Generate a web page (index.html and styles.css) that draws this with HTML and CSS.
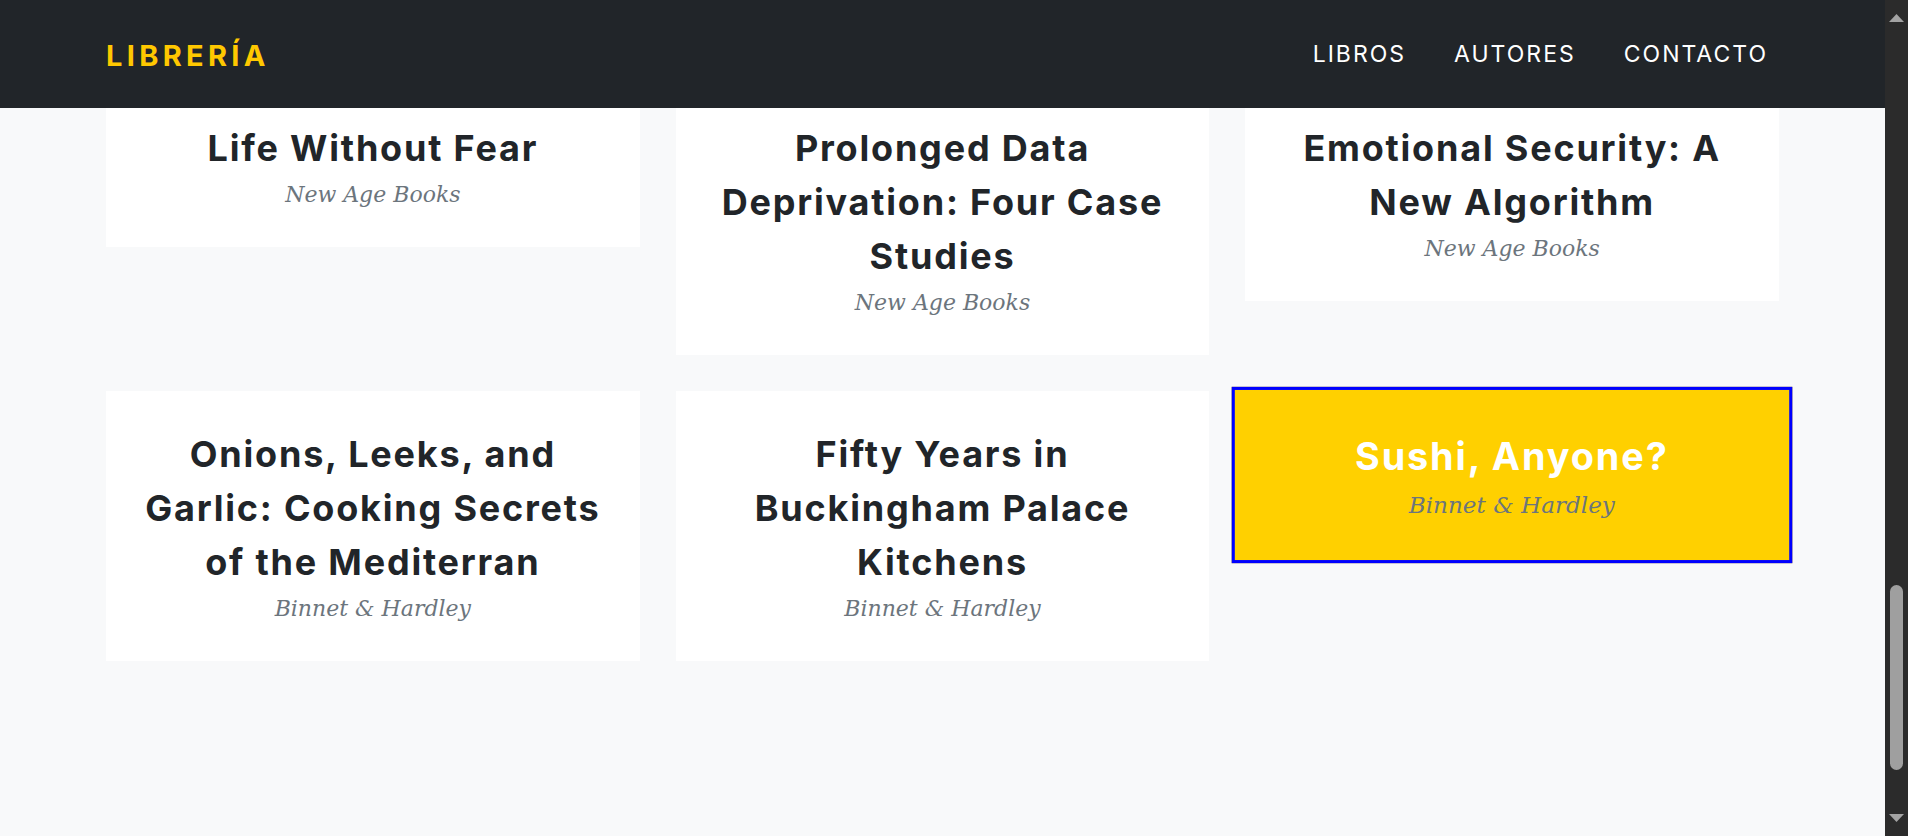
FILE: index.html
```html
<!DOCTYPE html>
<html lang="es">
<head>
<meta charset="utf-8">
<title>Librería</title>
<link rel="stylesheet" href="styles.css">
</head>
<body class="page">
  <div class="app">
    <div class="main">
      <nav class="navbar">
        <a class="brand" href="#">LIBRERÍA</a>
        <ul class="nav">
          <li><a class="nav-link" href="#">LIBROS</a></li>
          <li><a class="nav-link" href="#">AUTORES</a></li>
          <li><a class="nav-link" href="#">CONTACTO</a></li>
        </ul>
      </nav>
      <div class="viewport">
        <section class="grid">
          <article class="card">
            <h3 class="card-title">Life Without Fear</h3>
            <p class="card-sub">New Age Books</p>
          </article>
          <article class="card">
            <h3 class="card-title">Prolonged Data Deprivation: Four Case Studies</h3>
            <p class="card-sub">New Age Books</p>
          </article>
          <article class="card">
            <h3 class="card-title">Emotional Security: A New Algorithm</h3>
            <p class="card-sub">New Age Books</p>
          </article>
          <article class="card">
            <h3 class="card-title">Onions, Leeks, and Garlic: Cooking Secrets of the Mediterran</h3>
            <p class="card-sub">Binnet &amp; Hardley</p>
          </article>
          <article class="card">
            <h3 class="card-title">Fifty Years in Buckingham Palace Kitchens</h3>
            <p class="card-sub">Binnet &amp; Hardley</p>
          </article>
          <article class="card card--active">
            <h3 class="card-title">Sushi, Anyone?</h3>
            <p class="card-sub">Binnet &amp; Hardley</p>
          </article>
        </section>
      </div>
    </div>
    <div class="scrollbar">
      <svg class="sb-arrow" width="15" height="8" viewBox="0 0 15 8"><polygon points="7.5,0 15,8 0,8" fill="#a3a3a3"/></svg>
      <div class="sb-thumb"></div>
      <svg class="sb-arrow sb-arrow--down" width="15" height="8" viewBox="0 0 15 8"><polygon points="0,0 15,0 7.5,8" fill="#a3a3a3"/></svg>
    </div>
  </div>
</body>
</html>
```

FILE: styles.css
```css
* { box-sizing: border-box; }

html, body {
  margin: 0;
  height: 100%;
}

.page {
  background: #f8f9fa;
  font-family: "Inter", "DejaVu Sans", sans-serif;
  color: #212529;
  overflow: hidden;
}

.app {
  display: flex;
  height: 100vh;
}

.main {
  flex: 1;
  display: flex;
  flex-direction: column;
  min-width: 0;
}

.navbar {
  height: 108px;
  flex: none;
  background: #212529;
  display: flex;
  align-items: center;
  justify-content: space-between;
  padding: 0 117px 0 106px;
}

.brand {
  color: #ffc800;
  text-decoration: none;
  font-weight: 700;
  font-size: 29px;
  letter-spacing: 4.3px;
  margin-top: 2px;
}

.nav {
  list-style: none;
  margin: 0;
  padding: 0;
  display: flex;
  gap: 48px;
}

.nav-link {
  color: #fff;
  text-decoration: none;
  font-size: 23px;
  font-weight: 400;
  letter-spacing: 2px;
}

.viewport {
  flex: 1;
  overflow: hidden;
  padding: 0 106px;
}

.grid {
  display: grid;
  grid-template-columns: repeat(3, 1fr);
  gap: 36px;
  align-items: start;
  margin-top: -23px;
}

.card {
  background: #fff;
  padding: 36px 34px;
  text-align: center;
}

.card-title {
  margin: 0 0 3px;
  font-size: 36px;
  line-height: 54px;
  font-weight: 700;
  letter-spacing: 0.05em;
}

.card-sub {
  margin: 0;
  font-family: "DejaVu Serif", "Liberation Serif", serif;
  font-style: italic;
  font-size: 22px;
  line-height: 33px;
  color: #6c757d;
}

.card--active {
  background: #ffd000;
  border: 3px solid #0000ff;
  transform: scale(1.05);
}

.card--active .card-title {
  color: #fff;
}

.scrollbar {
  width: 23px;
  flex: none;
  background: #2b2b2b;
  display: flex;
  flex-direction: column;
  align-items: center;
  padding: 14px 0;
}

.sb-arrow {
  display: block;
  flex: none;
}

.sb-thumb {
  margin-top: auto;
  margin-bottom: 44px;
  width: 13px;
  height: 185px;
  border-radius: 7px;
  background: #9f9f9f;
}
```
